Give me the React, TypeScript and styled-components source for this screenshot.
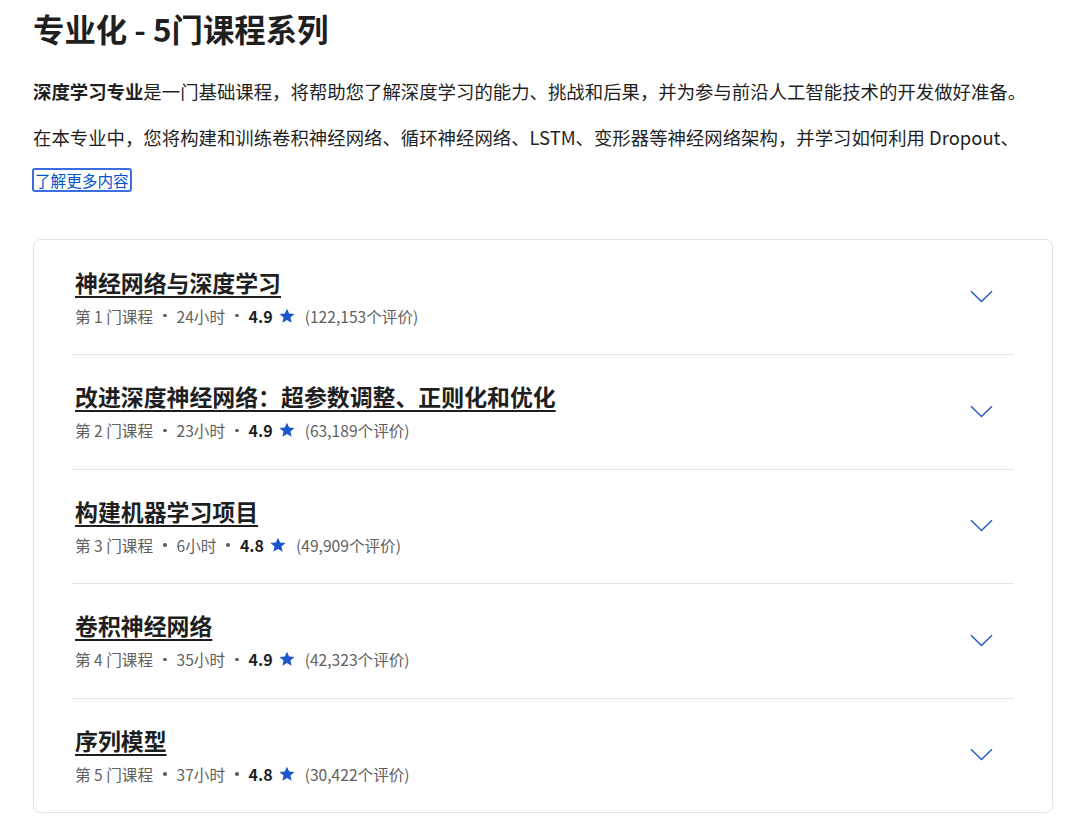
import React from "react";
import styled, { createGlobalStyle } from "styled-components";

const Global = createGlobalStyle`
  html, body { margin: 0; padding: 0; background: #fff; }
  body { font-family: "Noto Sans CJK SC", "Noto Sans", sans-serif; color: #1f1f1f; }
  * { box-sizing: border-box; }
`;

const Page = styled.div`
  width: 1080px;
  padding: 6px 27px 0 33px;
`;

const Heading = styled.h1`
  margin: 0;
  font-size: 31.4px;
  line-height: 46px;
  font-weight: 700;
  color: #1f1f1f;
`;

const Para = styled.p<{ $single?: boolean }>`
  margin: 26px 0 0;
  font-size: 18.4px;
  line-height: 26px;
  color: #1f1f1f;
  ${(p) => (p.$single ? "white-space: nowrap; overflow: hidden;" : "")}
  & + & { margin-top: 20px; }
`;

const Strong = styled.strong`
  font-weight: 700;
`;

const LinkLine = styled.div`
  margin-top: 18px;
  display: flex;
`;

const MoreLink = styled.a`
  margin-left: -1px;
  padding: 0 1px;
  font-size: 15.6px;
  line-height: 20px;
  color: #0056d2;
  text-decoration: none;
  border: 2px solid #3b6ee0;
  border-radius: 3px;
`;

const Card = styled.div`
  margin-top: 47px;
  width: 1020px;
  border: 1.5px solid #e3e3e3;
  border-radius: 8px;
  padding: 0 38px;
  box-shadow: 0 1px 3px rgba(0, 0, 0, 0.04);
`;

const Row = styled.div`
  display: flex;
  align-items: center;
  justify-content: space-between;
  height: 114.5px;
  padding: 0 0 1px 3px;
  &:first-child { height: 114px; }
  & + & { border-top: 1.5px solid #e6e6e6; }
`;

const RowText = styled.div`
  display: flex;
  flex-direction: column;
  gap: 8px;
`;

const CourseTitle = styled.a`
  font-size: 22.9px;
  line-height: 30px;
  font-weight: 700;
  color: #1f1f1f;
  text-decoration: underline;
  text-decoration-thickness: 2px;
  text-underline-offset: 4px;
  align-self: flex-start;
`;

const Meta = styled.div`
  display: flex;
  align-items: center;
  font-size: 15.6px;
  line-height: 22px;
  color: #5f5f5f;
`;

const Dot = styled.span`
  width: 3.5px;
  height: 3.5px;
  border-radius: 50%;
  background: #5f5f5f;
  margin: 0 10px;
`;

const Rating = styled.span`
  font-weight: 700;
  color: #1f1f1f;
  font-size: 16px;
`;

const Star = styled.svg`
  margin: 0 9px 0 5px;
  width: 18px;
  height: 18px;
`;

const Chevron = styled.svg`
  width: 23px;
  height: 13px;
  margin-right: 21px;
`;

const courses = [
  { title: "神经网络与深度学习", n: 1, hours: 24, rating: "4.9", reviews: "122,153" },
  { title: "改进深度神经网络：超参数调整、正则化和优化", n: 2, hours: 23, rating: "4.9", reviews: "63,189" },
  { title: "构建机器学习项目", n: 3, hours: 6, rating: "4.8", reviews: "49,909" },
  { title: "卷积神经网络", n: 4, hours: 35, rating: "4.9", reviews: "42,323" },
  { title: "序列模型", n: 5, hours: 37, rating: "4.8", reviews: "30,422" },
];

export default function App() {
  return (
    <>
      <Global />
      <Page>
        <Heading>专业化 - 5门课程系列</Heading>
        <Para>
          <Strong>深度学习专业</Strong>是一门基础课程，将帮助您了解深度学习的能力、挑战和后果，并为参与前沿人工智能技术的开发做好准备。
        </Para>
        <Para $single>
          在本专业中，您将构建和训练卷积神经网络、循环神经网络、LSTM、变形器等神经网络架构，并学习如何利用 Dropout、
        </Para>
        <LinkLine>
          <MoreLink href="#">了解更多内容</MoreLink>
        </LinkLine>
        <Card>
          {courses.map((c) => (
            <Row key={c.n}>
              <RowText>
                <CourseTitle href="#">{c.title}</CourseTitle>
                <Meta>
                  <span>第 {c.n} 门课程</span>
                  <Dot />
                  <span>{c.hours}小时</span>
                  <Dot />
                  <Rating>{c.rating}</Rating>
                  <Star viewBox="0 0 24 24">
                    <path
                      d="M12 2.2l2.9 6.6 7.1.6-5.4 4.7 1.6 7-6.2-3.7-6.2 3.7 1.6-7L2 9.4l7.1-.6z"
                      fill="#1d56c9"
                    />
                  </Star>
                  <span>({c.reviews}个评价)</span>
                </Meta>
              </RowText>
              <Chevron viewBox="0 0 23 13">
                <path d="M1 1.2l10.5 10.3L22 1.2" fill="none" stroke="#2a5cc0" strokeWidth="1.5" />
              </Chevron>
            </Row>
          ))}
        </Card>
      </Page>
    </>
  );
}
